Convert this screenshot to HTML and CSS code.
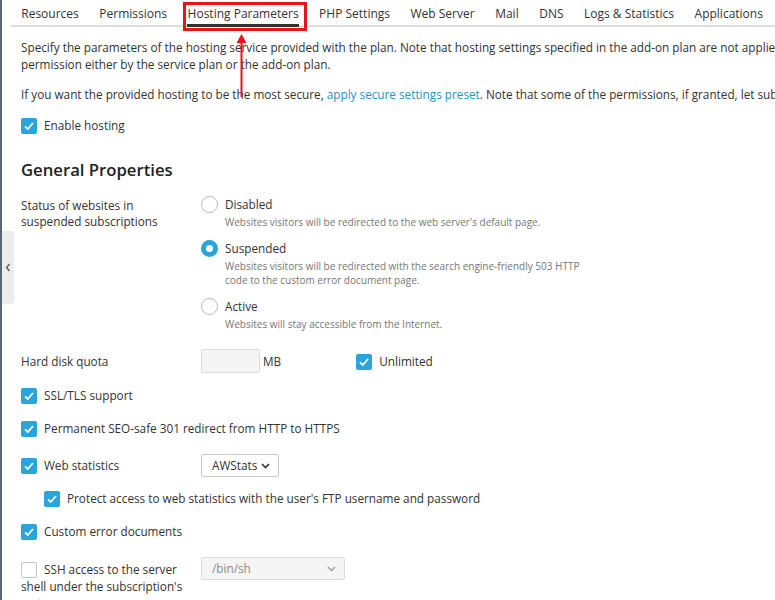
FILE: index.html
```html
<!DOCTYPE html>
<html lang="en">
<head>
<meta charset="utf-8">
<title>Hosting Parameters</title>
<link rel="stylesheet" href="styles.css">
</head>
<body>
<div class="side-tab"><svg width="6" height="9" viewBox="0 0 6 9"><path d="M4.5 1 L1.5 4.5 L4.5 8" fill="none" stroke="#555" stroke-width="1.3"/></svg></div>
<div class="page">
  <nav class="tabs">
    <span class="tab">Resources</span>
    <span class="tab">Permissions</span>
    <span class="tab active">Hosting Parameters<span class="callout"></span><svg class="arrow" width="13" height="65" viewBox="0 0 13 65"><path d="M6.5 1 L11.5 10 L1.5 10 Z" fill="#e8141a"/><rect x="5.5" y="9" width="2" height="55" fill="#e8141a"/></svg></span>
    <span class="tab">PHP Settings</span>
    <span class="tab">Web Server</span>
    <span class="tab">Mail</span>
    <span class="tab">DNS</span>
    <span class="tab">Logs &amp; Statistics</span>
    <span class="tab">Applications</span>
  </nav>

  <div class="content">
    <p class="intro">Specify the parameters of the hosting service provided with the plan. Note that hosting settings specified in the add-on plan are not applied<br>permission either by the service plan or the add-on plan.</p>
    <p class="intro intro-2">If you want the provided hosting to be the most secure, <a class="link" href="#">apply secure settings preset</a>. Note that some of the permissions, if granted, let subs</p>

    <div class="check-row enable"><span class="cb on"><svg width="16" height="16" viewBox="0 0 16 16"><path d="M4 8.3 L6.8 11 L12 5" fill="none" stroke="#fff" stroke-width="1.8"/></svg></span>Enable hosting</div>

    <h2 class="section-title">General Properties</h2>

    <div class="row status">
      <div class="label label-top">Status of websites in suspended subscriptions</div>
      <div class="radios">
        <div class="radio-item">
          <div class="radio-title"><span class="rd"></span>Disabled</div>
          <div class="hint">Websites visitors will be redirected to the web server's default page.</div>
        </div>
        <div class="radio-item">
          <div class="radio-title"><span class="rd on"></span>Suspended</div>
          <div class="hint">Websites visitors will be redirected with the search engine-friendly 503 HTTP<br>code to the custom error document page.</div>
        </div>
        <div class="radio-item">
          <div class="radio-title"><span class="rd"></span>Active</div>
          <div class="hint">Websites will stay accessible from the Internet.</div>
        </div>
      </div>
    </div>

    <div class="row quota">
      <div class="label">Hard disk quota</div>
      <div class="control">
        <span class="input disabled"></span><span class="unit">MB</span>
        <span class="unlimited"><span class="cb on"><svg width="16" height="16" viewBox="0 0 16 16"><path d="M4 8.3 L6.8 11 L12 5" fill="none" stroke="#fff" stroke-width="1.8"/></svg></span>Unlimited</span>
      </div>
    </div>

    <div class="check-row ssl"><span class="cb on"><svg width="16" height="16" viewBox="0 0 16 16"><path d="M4 8.3 L6.8 11 L12 5" fill="none" stroke="#fff" stroke-width="1.8"/></svg></span>SSL/TLS support</div>

    <div class="check-row seo"><span class="cb on"><svg width="16" height="16" viewBox="0 0 16 16"><path d="M4 8.3 L6.8 11 L12 5" fill="none" stroke="#fff" stroke-width="1.8"/></svg></span>Permanent SEO-safe 301 redirect from HTTP to HTTPS</div>

    <div class="row webstat">
      <div class="label"><span class="cb on"><svg width="16" height="16" viewBox="0 0 16 16"><path d="M4 8.3 L6.8 11 L12 5" fill="none" stroke="#fff" stroke-width="1.8"/></svg></span>Web statistics</div>
      <div class="control">
        <div class="select stats-select"><span>AWStats</span><svg width="9" height="6" viewBox="0 0 9 6"><path d="M1 1 L4.5 4.5 L8 1" fill="none" stroke="#333" stroke-width="1.6"/></svg></div>
      </div>
    </div>

    <div class="check-row protect"><span class="cb on"><svg width="16" height="16" viewBox="0 0 16 16"><path d="M4 8.3 L6.8 11 L12 5" fill="none" stroke="#fff" stroke-width="1.8"/></svg></span>Protect access to web statistics with the user's FTP username and password</div>

    <div class="check-row custom"><span class="cb on"><svg width="16" height="16" viewBox="0 0 16 16"><path d="M4 8.3 L6.8 11 L12 5" fill="none" stroke="#fff" stroke-width="1.8"/></svg></span>Custom error documents</div>

    <div class="row ssh">
      <div class="label label-wrap"><span class="cb"></span>SSH access to the server shell under the subscription's system user</div>
      <div class="control control-top">
        <div class="select shell-select disabled"><span>/bin/sh</span><svg width="9" height="6" viewBox="0 0 9 6"><path d="M1 1 L4.5 4.5 L8 1" fill="none" stroke="#999" stroke-width="1.4"/></svg></div>
      </div>
    </div>
  </div>
</div>
</body>
</html>
```

FILE: styles.css
```css
html, body {
  margin: 0;
  padding: 0;
}

body {
  height: 600px;
  overflow: hidden;
  border-left: 2px solid #5b6770;
  background: #fff;
  color: #333;
  font-family: "Open Sans", "Noto Sans", sans-serif;
  font-size: 11.75px;
  line-height: 17px;
  position: relative;
}

.side-tab {
  position: absolute;
  left: 0;
  top: 231px;
  width: 12px;
  height: 73px;
  background: #ececec;
  border-radius: 0 3px 3px 0;
  display: flex;
  align-items: center;
  justify-content: center;
}

.page {
  width: 1100px;
}

/* Tabs */
.tabs {
  display: flex;
  margin-left: 9px;
  height: 25px;
  border-bottom: 2px solid #dedede;
}

.tab {
  position: relative;
  padding: 5px 10.25px 2px;
  font-size: 12px;
  line-height: 18px;
  white-space: nowrap;
  color: #333;
}

.tab.active::after {
  content: "";
  position: absolute;
  left: 10px;
  right: 10px;
  bottom: -2px;
  height: 3px;
  background: #333;
}

.callout {
  position: absolute;
  left: 6px;
  top: 2px;
  width: 124px;
  height: 29px;
  border: 3px solid #e8141a;
  box-sizing: border-box;
  z-index: 2;
}

.arrow {
  position: absolute;
  left: 58px;
  top: 33px;
  z-index: 2;
}

/* Content */
.content {
  padding-left: 19px;
}

.intro {
  margin: 12px 0 0;
  white-space: nowrap;
}

.intro-2 {
  margin-top: 13px;
}

.link {
  color: #2593c6;
  text-decoration: none;
}

.cb {
  display: inline-block;
  width: 16px;
  height: 16px;
  box-sizing: border-box;
  border: 1px solid #c4c4c4;
  border-radius: 2px;
  background: #fff;
  vertical-align: -4px;
  margin-right: 7px;
}

.cb.on {
  border: none;
  background: #29a5dc;
}

.cb svg {
  display: block;
}

.check-row {
  line-height: 18px;
  white-space: nowrap;
}

.enable {
  margin-top: 13px;
}

.section-title {
  margin: 24px 0 0;
  font-size: 16.7px;
  line-height: 24px;
  font-weight: 600;
  color: #222;
}

.row {
  display: grid;
  grid-template-columns: 163px 1fr;
  column-gap: 17px;
  align-items: center;
}

.label {
  line-height: 16px;
}

.label-top {
  align-self: start;
  padding-top: 2px;
}

.status {
  margin-top: 13px;
}

.radio-item + .radio-item {
  margin-top: 10px;
}

.radio-title {
  display: flex;
  align-items: center;
  line-height: 18px;
}

.rd {
  width: 17px;
  height: 17px;
  box-sizing: border-box;
  border-radius: 50%;
  border: 1px solid #b8b8b8;
  background: #fff;
  margin-right: 7px;
  flex: none;
}

.rd.on {
  border: 5px solid #29a5dc;
}

.hint {
  margin-top: 2px;
  padding-left: 24px;
  font-size: 10px;
  line-height: 14px;
  color: #767676;
  white-space: nowrap;
}

.quota {
  margin-top: 18px;
}

.control {
  display: flex;
  align-items: center;
  white-space: nowrap;
}

.input {
  width: 59px;
  height: 24px;
  box-sizing: border-box;
  border: 1px solid #dcdcdc;
  border-radius: 2px;
  background: #f5f5f5;
}

.unit {
  margin-left: 3px;
}

.unlimited {
  margin-left: 75px;
}

.ssl {
  margin-top: 13px;
}

.seo {
  margin-top: 15px;
}

.webstat {
  margin-top: 17px;
}

.select {
  height: 23px;
  box-sizing: border-box;
  border: 1px solid #c8c8c8;
  border-radius: 2px;
  background: #fff;
  display: flex;
  align-items: center;
  justify-content: space-between;
  padding: 0 8px 0 10px;
}

.stats-select {
  width: 78px;
}

.shell-select {
  width: 144px;
}

.select.disabled {
  background: #f5f5f5;
  border-color: #dcdcdc;
  color: #8a8a8a;
}

.protect {
  margin-top: 12px;
  padding-left: 23px;
}

.custom {
  margin-top: 15px;
}

.ssh {
  margin-top: 17px;
  align-items: start;
}

.label-wrap {
  line-height: 17px;
  padding-top: 4px;
}
```
